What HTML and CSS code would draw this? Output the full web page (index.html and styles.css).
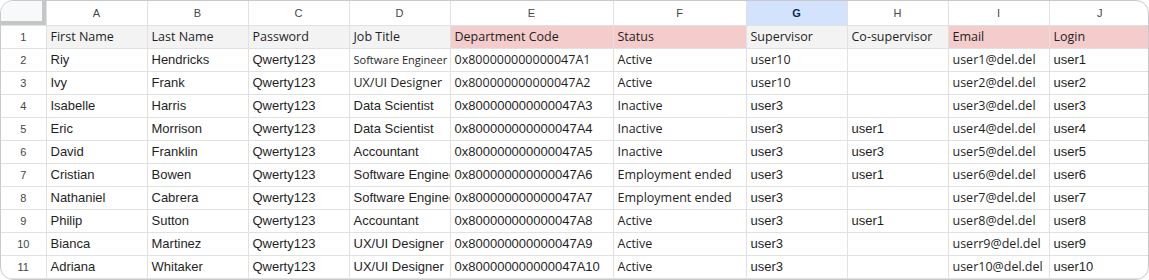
FILE: index.html
```html
<!DOCTYPE html>
<html lang="en">
<head>
  <meta charset="UTF-8">
  <title>Users sheet</title>
  <link rel="stylesheet" href="styles.css">
</head>
<body>
  <div class="sheet">
    <table class="grid">
      <colgroup>
        <col class="w-idx">
        <col class="w-std"><col class="w-std"><col class="w-std"><col class="w-std">
        <col class="w-wide"><col class="w-mid">
        <col class="w-std"><col class="w-std"><col class="w-std"><col class="w-std">
      </colgroup>
      <thead>
        <tr class="letters">
          <th class="corner"></th>
          <th>A</th><th>B</th><th>C</th><th>D</th><th>E</th><th>F</th>
          <th class="selected">G</th><th>H</th><th>I</th><th>J</th>
        </tr>
      </thead>
      <tbody>
        <tr class="head-row">
          <td class="idx">1</td>
          <td>First Name</td>
          <td>Last Name</td>
          <td>Password</td>
          <td>Job Title</td>
          <td class="pink">Department Code</td>
          <td class="pink">Status</td>
          <td>Supervisor</td>
          <td>Co-supervisor</td>
          <td class="pink">Email</td>
          <td class="pink">Login</td>
        </tr>
        <tr>
          <td class="idx">2</td>
          <td>Riy</td><td>Hendricks</td><td>Qwerty123</td>
          <td class="seg small">Software Engineer</td>
          <td class="seg">0x800000000000047A1</td>
          <td class="seg">Active</td>
          <td class="seg">user10</td>
          <td></td>
          <td class="seg">user1@del.del</td>
          <td>user1</td>
        </tr>
        <tr>
          <td class="idx">3</td>
          <td>Ivy</td><td>Frank</td><td>Qwerty123</td>
          <td class="seg">UX/UI Designer</td>
          <td class="seg">0x800000000000047A2</td>
          <td class="seg">Active</td>
          <td class="seg">user10</td>
          <td></td>
          <td class="seg">user2@del.del</td>
          <td>user2</td>
        </tr>
        <tr>
          <td class="idx">4</td>
          <td>Isabelle</td><td>Harris</td><td>Qwerty123</td>
          <td>Data Scientist</td>
          <td>0x800000000000047A3</td>
          <td class="seg">Inactive</td>
          <td>user3</td>
          <td></td>
          <td class="seg">user3@del.del</td>
          <td>user3</td>
        </tr>
        <tr>
          <td class="idx">5</td>
          <td>Eric</td><td>Morrison</td><td>Qwerty123</td>
          <td>Data Scientist</td>
          <td>0x800000000000047A4</td>
          <td class="seg">Inactive</td>
          <td>user3</td>
          <td>user1</td>
          <td class="seg">user4@del.del</td>
          <td>user4</td>
        </tr>
        <tr>
          <td class="idx">6</td>
          <td>David</td><td>Franklin</td><td>Qwerty123</td>
          <td>Accountant</td>
          <td>0x800000000000047A5</td>
          <td class="seg">Inactive</td>
          <td>user3</td>
          <td>user3</td>
          <td class="seg">user5@del.del</td>
          <td>user5</td>
        </tr>
        <tr>
          <td class="idx">7</td>
          <td>Cristian</td><td>Bowen</td><td>Qwerty123</td>
          <td>Software Engineer</td>
          <td>0x800000000000047A6</td>
          <td class="seg">Employment ended</td>
          <td>user3</td>
          <td>user1</td>
          <td class="seg">user6@del.del</td>
          <td>user6</td>
        </tr>
        <tr>
          <td class="idx">8</td>
          <td>Nathaniel</td><td>Cabrera</td><td>Qwerty123</td>
          <td>Software Engineer</td>
          <td>0x800000000000047A7</td>
          <td class="seg">Employment ended</td>
          <td>user3</td>
          <td></td>
          <td class="seg">user7@del.del</td>
          <td>user7</td>
        </tr>
        <tr>
          <td class="idx">9</td>
          <td>Philip</td><td>Sutton</td><td>Qwerty123</td>
          <td>Accountant</td>
          <td>0x800000000000047A8</td>
          <td class="seg">Active</td>
          <td>user3</td>
          <td>user1</td>
          <td class="seg">user8@del.del</td>
          <td>user8</td>
        </tr>
        <tr>
          <td class="idx">10</td>
          <td>Bianca</td><td>Martinez</td><td>Qwerty123</td>
          <td>UX/UI Designer</td>
          <td>0x800000000000047A9</td>
          <td class="seg">Active</td>
          <td>user3</td>
          <td></td>
          <td class="seg">userr9@del.del</td>
          <td>user9</td>
        </tr>
        <tr>
          <td class="idx">11</td>
          <td>Adriana</td><td>Whitaker</td><td>Qwerty123</td>
          <td>UX/UI Designer</td>
          <td>0x800000000000047A10</td>
          <td class="seg">Active</td>
          <td>user3</td>
          <td></td>
          <td class="seg">user10@del.del</td>
          <td>user10</td>
        </tr>
      </tbody>
    </table>
  </div>
</body>
</html>
```

FILE: styles.css
```css
:root {
  --grid-line: #e1e1e1;
  --outer: #c9c9c9;
  --text: #1f1f1f;
  --muted: #444746;
  --head-bg: #f3f3f3;
  --pink: #f4cccc;
  --selected: #d3e3fd;
}

* {
  margin: 0;
  padding: 0;
  box-sizing: border-box;
}

body {
  background: #ffffff;
  font-family: 'Liberation Sans', Arial, sans-serif;
  color: var(--text);
}

.sheet {
  width: 1149px;
  height: 280px;
  border: 1px solid var(--outer);
  border-radius: 13px;
  overflow: hidden;
  background: #fff;
}

.grid {
  width: 100%;
  border-collapse: collapse;
  table-layout: fixed;
}

.w-idx { width: 45px; }
.w-std { width: 101px; }
.w-wide { width: 163px; }
.w-mid { width: 133px; }

.grid th,
.grid td {
  border: 1px solid var(--grid-line);
  white-space: nowrap;
  overflow: hidden;
  vertical-align: middle;
}

.grid tr:first-child th { border-top: none; }
.grid tr th:first-child,
.grid tr td:first-child { border-left: none; }
.grid tr th:last-child,
.grid tr td:last-child { border-right: none; }

.letters {
  height: 24px;
}

.letters th {
  font-weight: 400;
  font-size: 11px;
  color: var(--muted);
  text-align: center;
}

.letters .selected {
  background: var(--selected);
  font-weight: 700;
  color: #0b2a5a;
}

.corner {
  background: #f8f9fa;
  box-shadow: inset -4px -4px 0 #c4c7c5;
}

.grid tbody tr {
  height: 23px;
}

.grid td {
  font-size: 13px;
  padding: 0 4px;
  text-overflow: clip;
}

.grid td.idx {
  text-align: center;
  font-size: 11px;
  color: var(--muted);
  padding: 0;
}

.head-row td {
  background: var(--head-bg);
  font-family: 'Open Sans', 'Noto Sans', sans-serif;
  font-size: 12.5px;
}

.head-row td.idx {
  background: #fff;
  font-family: 'Liberation Sans', Arial, sans-serif;
  font-size: 11px;
}

.head-row td.pink {
  background: var(--pink);
}

.seg {
  font-family: 'Open Sans', 'Noto Sans', sans-serif;
}

.grid td.seg {
  font-size: 12.5px;
}

.grid td.small {
  font-size: 11px;
}
```
